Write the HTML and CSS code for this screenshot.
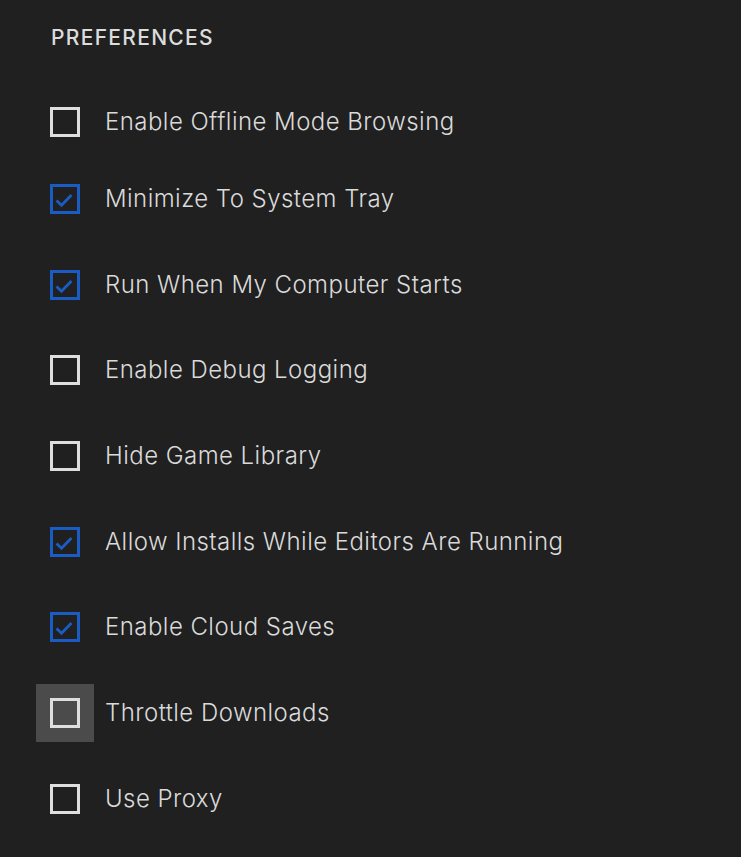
FILE: index.html
```html
<!DOCTYPE html>
<html>
<head>
<meta charset="utf-8">
<link rel="stylesheet" href="styles.css">
</head>
<body>
<div class="panel">
  <h2 class="title">PREFERENCES</h2>
  <ul class="list">
    <li class="row"><span class="box-wrap"><span class="box"></span></span><span class="label">Enable Offline Mode Browsing</span></li>
    <li class="row"><span class="box-wrap"><span class="box checked"><svg viewBox="0 0 24 24" width="24" height="24"><polyline points="3.5,13.5 8.5,18.2 18.5,8"/></svg></span></span><span class="label">Minimize To System Tray</span></li>
    <li class="row"><span class="box-wrap"><span class="box checked"><svg viewBox="0 0 24 24" width="24" height="24"><polyline points="3.5,13.5 8.5,18.2 18.5,8"/></svg></span></span><span class="label">Run When My Computer Starts</span></li>
    <li class="row"><span class="box-wrap"><span class="box"></span></span><span class="label">Enable Debug Logging</span></li>
    <li class="row"><span class="box-wrap"><span class="box"></span></span><span class="label">Hide Game Library</span></li>
    <li class="row"><span class="box-wrap"><span class="box checked"><svg viewBox="0 0 24 24" width="24" height="24"><polyline points="3.5,13.5 8.5,18.2 18.5,8"/></svg></span></span><span class="label">Allow Installs While Editors Are Running</span></li>
    <li class="row"><span class="box-wrap"><span class="box checked"><svg viewBox="0 0 24 24" width="24" height="24"><polyline points="3.5,13.5 8.5,18.2 18.5,8"/></svg></span></span><span class="label">Enable Cloud Saves</span></li>
    <li class="row"><span class="box-wrap hover"><span class="box"></span></span><span class="label">Throttle Downloads</span></li>
    <li class="row"><span class="box-wrap"><span class="box"></span></span><span class="label">Use Proxy</span></li>
  </ul>
</div>
</body>
</html>
```
FILE: styles.css
```css
html, body {
  margin: 0;
  padding: 0;
  background: #202020;
}
body {
  width: 741px;
  height: 857px;
  overflow: hidden;
  font-family: Inter, "Noto Sans", sans-serif;
  color: #d8d8d8;
}
.panel {
  padding: 25px 0 0 36px;
}
.title {
  margin: 0 0 0 15px;
  font-size: 21px;
  font-weight: 500;
  line-height: 26px;
  letter-spacing: 1.3px;
  color: #dcdcdc;
}
.list {
  list-style: none;
  margin: 42px 0 0 0;
  padding: 0;
  display: flex;
  flex-direction: column;
  gap: 27.67px;
}
.row {
  display: flex;
  align-items: center;
  height: 58px;
}
.row:first-child {
  margin-bottom: -8.67px;
}
.box-wrap {
  width: 58px;
  height: 58px;
  display: flex;
  align-items: center;
  justify-content: center;
  flex: none;
}
.box-wrap.hover {
  background: #4b4b4b;
}
.box {
  width: 30px;
  height: 30px;
  box-sizing: border-box;
  border: 3px solid #dedede;
  display: flex;
  align-items: center;
  justify-content: center;
}
.box.checked {
  border-color: #1b5cc4;
}
.box svg {
  display: block;
}
.box svg polyline {
  fill: none;
  stroke: #1b5cc4;
  stroke-width: 2.8;
}
.label {
  margin-left: 11px;
  font-size: 24px;
  font-weight: 300;
  line-height: 30px;
  letter-spacing: 0.45px;
  color: #dadada;
}
```
